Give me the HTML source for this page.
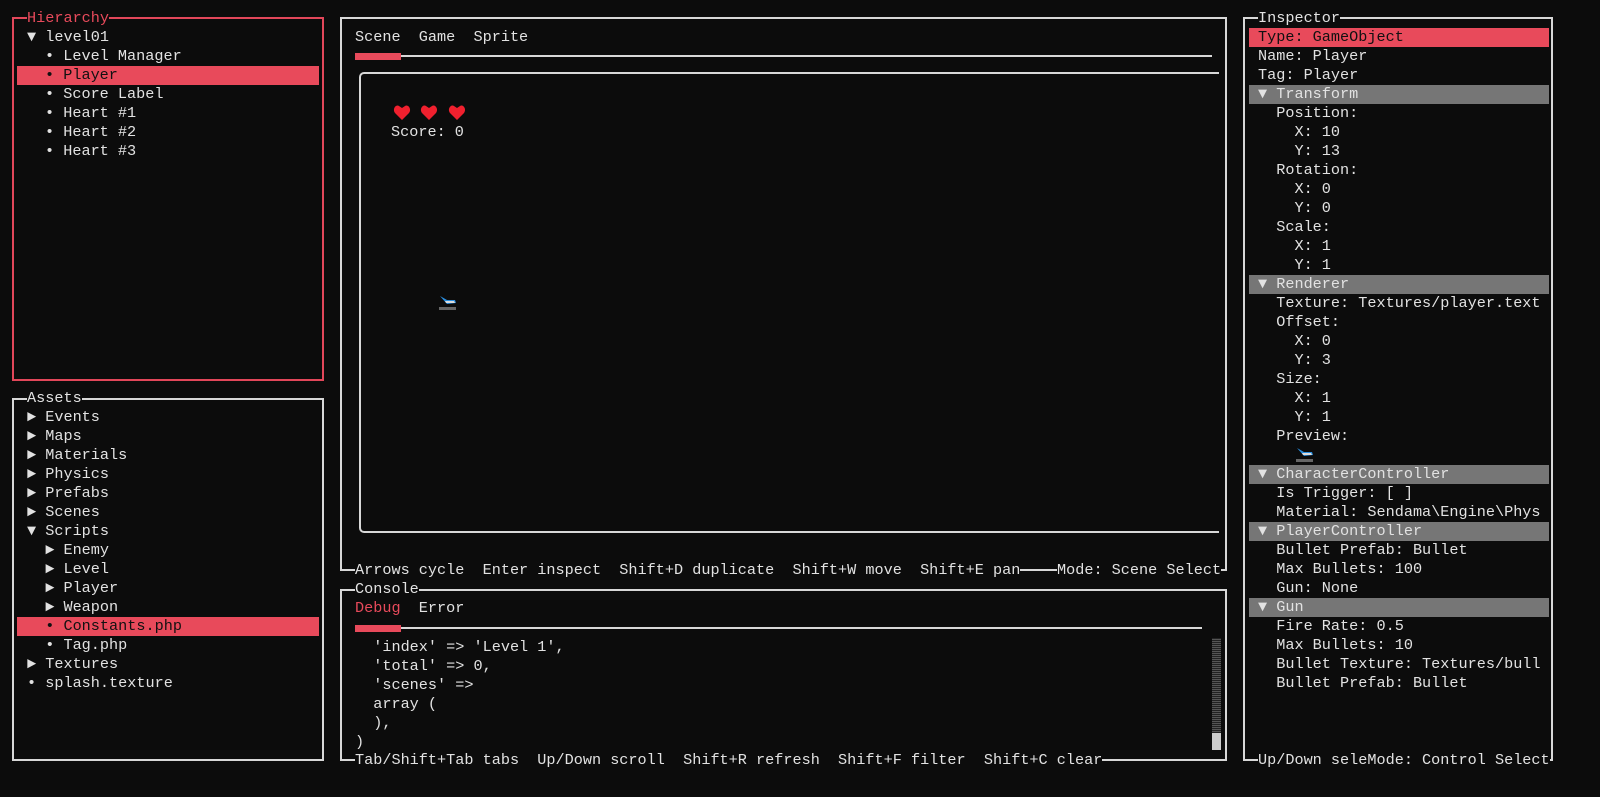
<!DOCTYPE html>
<html><head><meta charset="utf-8"><style>
html,body{margin:0;padding:0;background:#0c0c0c;width:1600px;height:797px;overflow:hidden}
body{position:relative;font-family:"Liberation Mono",monospace;font-size:15.2px;color:#e2e2e2}
.t{position:absolute;white-space:pre;line-height:19px;height:19px}
.b{position:absolute;border:2px solid #d8d8d8;box-sizing:border-box}
.r{border-color:#e2475a}
.bg{background:#0c0c0c}
.hl{position:absolute;background:#e84a5b;height:19px}
.gr{position:absolute;background:#767676;height:19px;left:1249px;width:300px}
.ln{position:absolute;height:2px;background:#d8d8d8}
.ind{position:absolute;height:7px;background:#e84a5b}
.red{color:#e84a5b}
</style></head><body>
<!-- Hierarchy -->
<div class="b r" style="left:12px;top:17px;width:312px;height:364px"></div>
<div class="t bg red" style="left:27px;top:9px">Hierarchy</div>
<div class="hl" style="left:17px;top:66px;width:302px"></div>
<div class="t" style="left:27px;top:28px">▼ level01</div>
<div class="t" style="left:45px;top:47px">• Level Manager</div>
<div class="t" style="left:45px;top:66px;color:#111">• Player</div>
<div class="t" style="left:45px;top:85px">• Score Label</div>
<div class="t" style="left:45px;top:104px">• Heart #1</div>
<div class="t" style="left:45px;top:123px">• Heart #2</div>
<div class="t" style="left:45px;top:142px">• Heart #3</div>
<!-- Assets -->
<div class="b" style="left:12px;top:398px;width:312px;height:363px"></div>
<div class="t bg" style="left:27px;top:389px">Assets</div>
<div class="hl" style="left:17px;top:617px;width:302px"></div>
<div class="t" style="left:27px;top:408px">► Events
► Maps
► Materials
► Physics
► Prefabs
► Scenes
▼ Scripts
  ► Enemy
  ► Level
  ► Player
  ► Weapon
<span style="color:#111">  • Constants.php</span>
  • Tag.php
► Textures
• splash.texture</div>
<!-- Scene -->
<div class="b" style="left:340px;top:17px;width:887px;height:554px"></div>
<div class="t" style="left:355px;top:28px">Scene  Game  Sprite</div>
<div class="ln" style="left:355px;top:55px;width:857px"></div>
<div class="ind" style="left:355px;top:53px;width:46px"></div>
<div class="b" style="left:359px;top:72px;width:860px;height:461px;border-radius:5px;border-right:none;border-top-right-radius:0;border-bottom-right-radius:0"></div>
<svg style="position:absolute;left:393px;top:104px" width="80" height="18">
<g fill="#f0202e">
<path d="M9 16 L2 9 C-1 5 3 0 6 2 L9 4 L12 2 C15 0 19 5 16 9 Z"/>
<path transform="translate(27 0)" d="M9 16 L2 9 C-1 5 3 0 6 2 L9 4 L12 2 C15 0 19 5 16 9 Z"/>
<path transform="translate(55 0)" d="M9 16 L2 9 C-1 5 3 0 6 2 L9 4 L12 2 C15 0 19 5 16 9 Z"/>
</g></svg>
<div class="t" style="left:391px;top:123px">Score: 0</div>
<svg style="position:absolute;left:437px;top:293px" width="22" height="20"><path d="M3 3 L10 7 L18 7 L19 10 L10 11 Z" fill="#2a8fe0"/><path d="M8 8 L17 8 L18 10 L9 10Z" fill="#ddd"/><rect x="2" y="14" width="17" height="3" fill="#666"/></svg>
<div class="t bg" style="left:355px;top:561px">Arrows cycle  Enter inspect  Shift+D duplicate  Shift+W move  Shift+E pan</div>
<div class="t bg" style="left:1057px;top:561px">Mode: Scene Select</div>
<!-- Console -->
<div class="b" style="left:340px;top:589px;width:887px;height:172px"></div>
<div class="t bg" style="left:355px;top:580px">Console</div>
<div class="t" style="left:355px;top:599px"><span class="red">Debug</span>  Error</div>
<div class="ln" style="left:355px;top:627px;width:847px"></div>
<div class="ind" style="left:355px;top:625px;width:46px"></div>
<div class="t" style="left:355px;top:638px">  'index' =&gt; 'Level 1',
  'total' =&gt; 0,
  'scenes' =&gt;
  array (
  ),
)</div>
<div style="position:absolute;left:1212px;top:638px;width:9px;height:112px;background:repeating-linear-gradient(0deg,#555 0 1px,#222 1px 2px)"></div>
<div style="position:absolute;left:1212px;top:733px;width:9px;height:17px;background:#ccc"></div>
<div class="t bg" style="left:355px;top:751px">Tab/Shift+Tab tabs  Up/Down scroll  Shift+R refresh  Shift+F filter  Shift+C clear</div>
<!-- Inspector -->
<div class="b" style="left:1243px;top:17px;width:310px;height:744px"></div>
<div class="t bg" style="left:1258px;top:9px">Inspector</div>
<div class="hl" style="left:1249px;top:28px;width:300px"></div>
<div class="gr" style="top:85px"></div>
<div class="gr" style="top:275px"></div>
<div class="gr" style="top:465px"></div>
<div class="gr" style="top:522px"></div>
<div class="gr" style="top:598px"></div>
<div class="t" style="left:1258px;top:28px;color:#111">Type: GameObject</div>
<div class="t" style="left:1258px;top:47px">Name: Player
Tag: Player
▼ Transform
  Position:
    X: 10
    Y: 13
  Rotation:
    X: 0
    Y: 0
  Scale:
    X: 1
    Y: 1
▼ Renderer
  Texture: Textures/player.text
  Offset:
    X: 0
    Y: 3
  Size:
    X: 1
    Y: 1
  Preview:

▼ CharacterController
  Is Trigger: [ ]
  Material: Sendama\Engine\Phys
▼ PlayerController
  Bullet Prefab: Bullet
  Max Bullets: 100
  Gun: None
▼ Gun
  Fire Rate: 0.5
  Max Bullets: 10
  Bullet Texture: Textures/bull
  Bullet Prefab: Bullet</div>
<svg style="position:absolute;left:1294px;top:445px" width="22" height="20"><path d="M3 3 L10 7 L18 7 L19 10 L10 11 Z" fill="#2a8fe0"/><path d="M8 8 L17 8 L18 10 L9 10Z" fill="#ddd"/><rect x="2" y="14" width="17" height="3" fill="#666"/></svg>
<div class="t bg" style="left:1258px;top:751px">Up/Down seleMode: Control Select</div>
</body></html>
